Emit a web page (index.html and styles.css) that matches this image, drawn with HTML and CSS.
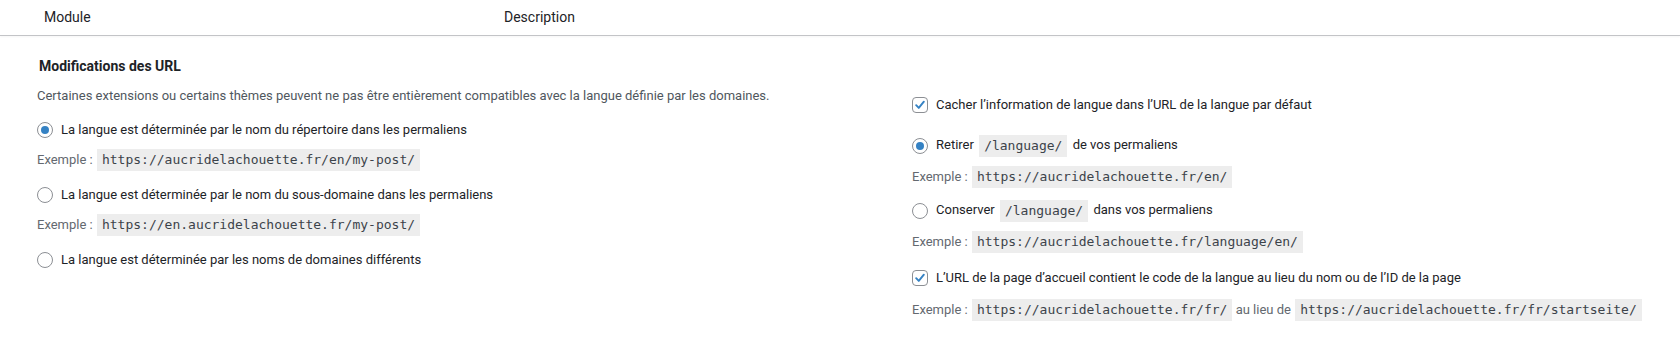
FILE: index.html
```html
<!DOCTYPE html>
<html lang="fr">
<head>
<meta charset="utf-8">
<title>Modifications des URL</title>
<link rel="stylesheet" href="styles.css">
</head>
<body>
<div class="table-head">
  <div class="th th-module">Module</div>
  <div class="th">Description</div>
</div>
<div class="settings">
  <div class="col col-left">
    <h4 class="title">Modifications des URL</h4>
    <p class="desc">Certaines extensions ou certains thèmes peuvent ne pas être entièrement compatibles avec la langue définie par les domaines.</p>
    <div class="opt opt-first">
      <span class="radio checked"></span>
      <span class="label">La langue est déterminée par le nom du répertoire dans les permaliens</span>
    </div>
    <div class="example">Exemple&nbsp;: <code>https://aucridelachouette.fr/en/my-post/</code></div>
    <div class="opt">
      <span class="radio"></span>
      <span class="label">La langue est déterminée par le nom du sous-domaine dans les permaliens</span>
    </div>
    <div class="example">Exemple&nbsp;: <code>https://en.aucridelachouette.fr/my-post/</code></div>
    <div class="opt">
      <span class="radio"></span>
      <span class="label">La langue est déterminée par les noms de domaines différents</span>
    </div>
  </div>
  <div class="col col-right">
    <div class="opt opt-hide">
      <span class="checkbox"><svg viewBox="0 0 16 16" width="16" height="16"><path d="M3.6 8.2 L6.6 11.3 L12.4 4.2" fill="none" stroke="#3582c4" stroke-width="2.2" stroke-linecap="round" stroke-linejoin="round"/></svg></span>
      <span class="label">Cacher l’information de langue dans l’URL de la langue par défaut</span>
    </div>
    <div class="opt opt-code opt-remove">
      <span class="radio checked"></span>
      <span class="label">Retirer <code>/language/</code> de vos permaliens</span>
    </div>
    <div class="example">Exemple&nbsp;: <code>https://aucridelachouette.fr/en/</code></div>
    <div class="opt opt-code">
      <span class="radio"></span>
      <span class="label">Conserver <code>/language/</code> dans vos permaliens</span>
    </div>
    <div class="example">Exemple&nbsp;: <code>https://aucridelachouette.fr/language/en/</code></div>
    <div class="opt opt-home">
      <span class="checkbox"><svg viewBox="0 0 16 16" width="16" height="16"><path d="M3.6 8.2 L6.6 11.3 L12.4 4.2" fill="none" stroke="#3582c4" stroke-width="2.2" stroke-linecap="round" stroke-linejoin="round"/></svg></span>
      <span class="label">L’URL de la page d’accueil contient le code de la langue au lieu du nom ou de l’ID de la page</span>
    </div>
    <div class="example example-last">Exemple&nbsp;: <code>https://aucridelachouette.fr/fr/</code> au lieu de <code>https://aucridelachouette.fr/fr/startseite/</code></div>
  </div>
</div>
</body>
</html>
```

FILE: styles.css
```css
html, body {
  margin: 0;
  padding: 0;
  background: #ffffff;
}

body {
  font-family: Roboto, "Liberation Sans", Arial, sans-serif;
  font-size: 13px;
  line-height: 20px;
  color: #1d2327;
}

.table-head {
  display: flex;
  height: 35px;
  border-bottom: 1px solid #c3c4c7;
  box-shadow: 0 1px 2px rgba(0, 0, 0, 0.04);
  padding-left: 44px;
}

.th {
  font-size: 14px;
  line-height: 35px;
  color: #1d2327;
}

.th-module {
  width: 460px;
}

.settings {
  display: grid;
  grid-template-columns: 875px 1fr;
  padding: 20px 0 0 37px;
}

.col {
  display: flex;
  flex-direction: column;
  align-items: flex-start;
}

.title {
  margin: 0 0 0 2px;
  font-size: 14px;
  font-weight: 700;
  line-height: 20px;
  color: #1d2327;
}

.desc {
  margin: 10px 0 0;
  color: #50575e;
}

.opt {
  display: flex;
  align-items: center;
  height: 20px;
  margin-top: 14px;
}

.opt-first {
  margin-top: 14px;
}

.opt-code {
  height: 22px;
  margin-top: 12px;
}

.opt-hide {
  margin-top: 39px;
}

.opt-remove {
  margin-top: 20px;
}

.opt-home {
  margin-top: 15px;
}

.label {
  margin-left: 8px;
  white-space: nowrap;
}

.radio {
  box-sizing: border-box;
  width: 16px;
  height: 16px;
  border: 1px solid #8c8f94;
  border-radius: 50%;
  background: #fff;
  display: flex;
  align-items: center;
  justify-content: center;
  flex: none;
}

.radio.checked {
  border-color: #8c8f94;
}

.radio.checked::before {
  content: "";
  width: 8px;
  height: 8px;
  border-radius: 50%;
  background: #3582c4;
}

.checkbox {
  box-sizing: border-box;
  width: 16px;
  height: 16px;
  border: 1px solid #8c8f94;
  border-radius: 4px;
  background: #fff;
  display: flex;
  align-items: center;
  justify-content: center;
  flex: none;
}

.checkbox svg {
  display: block;
  width: 14px;
  height: 14px;
}

.example {
  margin-top: 9px;
  height: 22px;
  display: flex;
  align-items: center;
  white-space: pre;
  color: #646970;
}

.example-last {
  margin-top: 11px;
}

code {
  display: inline-block;
  height: 22px;
  padding: 0 5px;
  line-height: 22px;
  font-family: "DejaVu Sans Mono", "Liberation Mono", monospace;
  font-size: 13px;
  color: #3c434a;
  background: rgba(0, 0, 0, 0.07);
  vertical-align: middle;
}

.example code {
  margin-left: 1px;
}

.label code {
  margin: 0 2px;
}
```
